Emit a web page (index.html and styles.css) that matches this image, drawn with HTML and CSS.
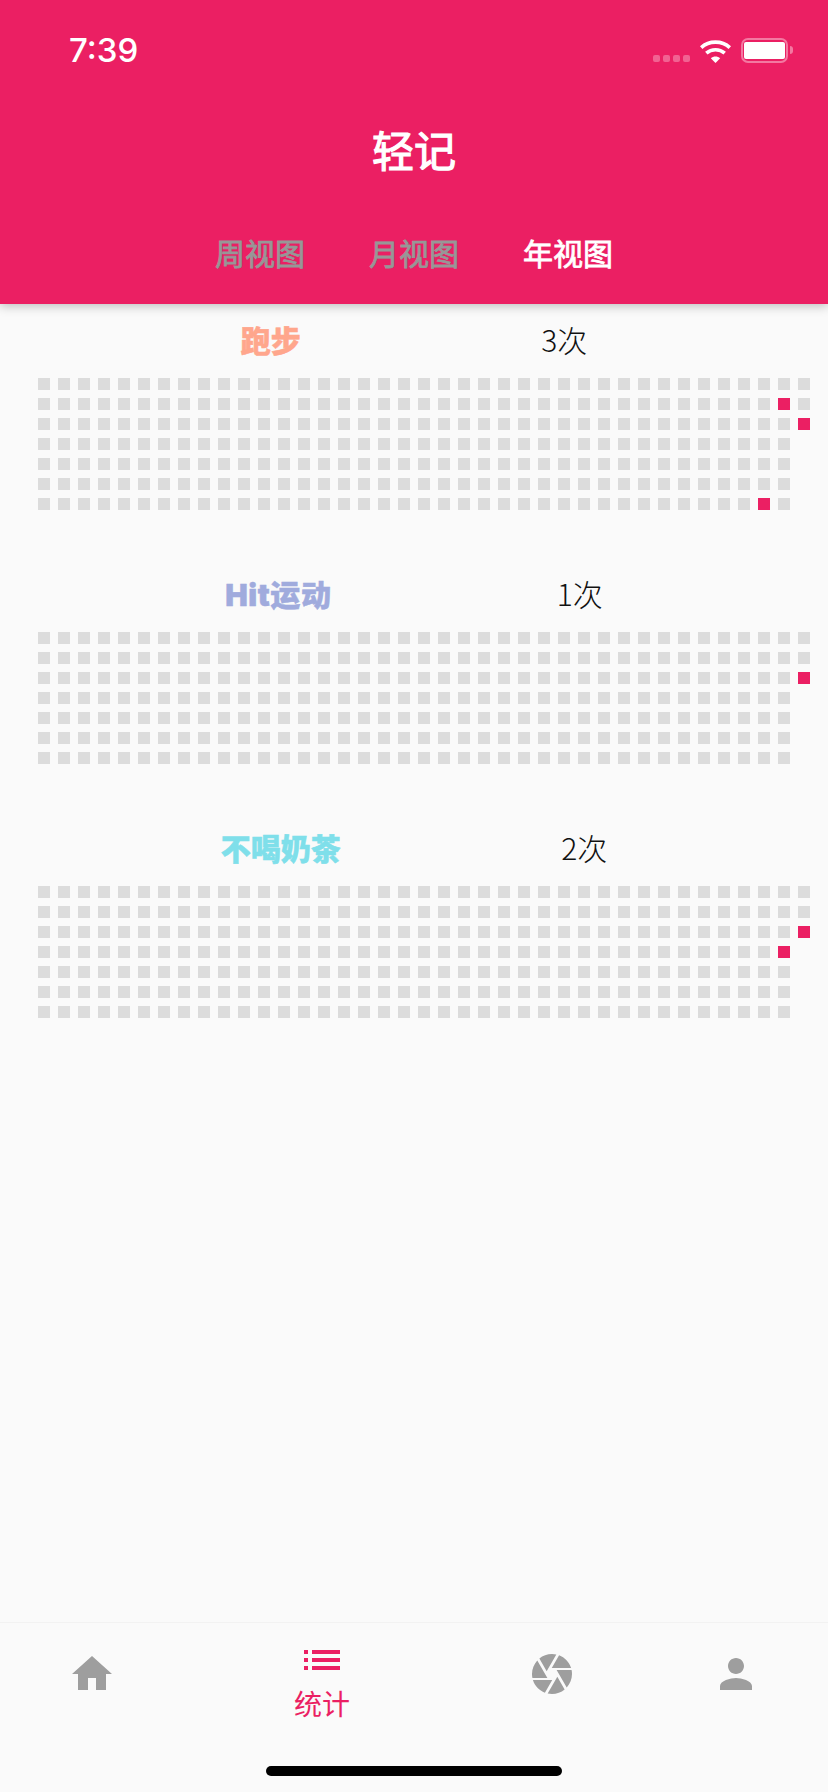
FILE: index.html
```html
<!DOCTYPE html>
<html lang="zh-CN">
<head>
	<meta charset="UTF-8">
	<title>轻记</title>
	<link rel="stylesheet" href="styles.css">
</head>
<body>
	<div class="app">
		<header class="top">
			<div class="status">
				<span class="time">7:39</span>
				<div class="status-icons">
					<div class="signal"><i></i><i></i><i></i><i></i></div>
					<svg class="wifi" width="31" height="23" viewBox="0 0 31 23">
						<path d="M1.2 7.6C9 .3 22 .3 29.8 7.6" fill="none" stroke="#fff" stroke-width="3.6"/>
						<path d="M6.3 13.2C11.5 8.6 19.5 8.6 24.7 13.2" fill="none" stroke="#fff" stroke-width="3.6"/>
						<path d="M10.8 18.2C13.5 16 17.5 16 20.2 18.2L15.5 23z" fill="#fff"/>
					</svg>
					<div class="battery"><div class="level"></div></div>
				</div>
			</div>
			<h1 class="title">轻记</h1>
			<nav class="tabs">
				<span class="tab">周视图</span>
				<span class="tab">月视图</span>
				<span class="tab active">年视图</span>
			</nav>
		</header>

		<main class="main">
			<section class="habit">
				<div class="habit-head">
					<span class="habit-name orange">跑步</span>
					<span class="habit-count">3次</span>
				</div>
				<div class="cells" data-hits="258,260,268"></div>
			</section>
			<section class="habit">
				<div class="habit-head">
					<span class="habit-name indigo">Hit运动</span>
					<span class="habit-count">1次</span>
				</div>
				<div class="cells" data-hits="268"></div>
			</section>
			<section class="habit">
				<div class="habit-head">
					<span class="habit-name cyan">不喝奶茶</span>
					<span class="habit-count">2次</span>
				</div>
				<div class="cells" data-hits="262,268"></div>
			</section>
		</main>

		<footer class="bottom">
			<div class="nav-item">
				<svg width="48" height="48" viewBox="0 0 24 24"><path d="M10 20v-6h4v6h5v-8h3L12 3 2 12h3v8z"/></svg>
			</div>
			<div class="nav-item active">
				<svg width="48" height="48" viewBox="0 0 24 24"><path d="M3 13h2v-2H3v2zm0 4h2v-2H3v2zm0-8h2V7H3v2zm4 4h14v-2H7v2zm0 4h14v-2H7v2zM7 7v2h14V7H7z"/></svg>
				<span class="nav-label">统计</span>
			</div>
			<div class="nav-item">
				<svg width="48" height="48" viewBox="0 0 24 24"><path d="M9.4 10.5l4.77-8.26C13.47 2.09 12.75 2 12 2c-2.4 0-4.6.85-6.32 2.25l3.66 6.35.06-.1zM21.54 9c-.92-2.92-3.15-5.26-6-6.34L11.88 9h9.66zm.26 1h-7.49l.29.5 4.76 8.25C21 16.97 22 14.61 22 12c0-.69-.07-1.35-.2-2zM8.54 12l-3.9-6.75C3.01 7.03 2 9.39 2 12c0 .69.07 1.35.2 2h7.49l-1.15-2zm-6.08 3c.92 2.92 3.15 5.26 6 6.34L12.12 15H2.46zm11.27 0l-3.9 6.76c.7.15 1.42.24 2.17.24 2.4 0 4.6-.85 6.32-2.25l-3.66-6.35-.93 1.6z"/></svg>
			</div>
			<div class="nav-item">
				<svg width="48" height="48" viewBox="0 0 24 24"><path d="M12 12c2.21 0 4-1.79 4-4s-1.79-4-4-4-4 1.79-4 4 1.79 4 4 4zm0 2c-2.67 0-8 1.34-8 4v2h16v-2c0-2.66-5.33-4-8-4z"/></svg>
			</div>
			<div class="home-bar"></div>
		</footer>
	</div>
	<script src="script.js"></script>
</body>
</html>
```
FILE: styles.css
```css
body{
	margin: 0;
	background: #fafafa;
	font-family: "Liberation Sans", "Noto Sans CJK SC", sans-serif;
}
.app{
	width: 828px;
	height: 1792px;
	display: flex;
	flex-direction: column;
	overflow: hidden;
}

/* header */
.top{
	height: 304px;
	flex: none;
	position: relative;
	background: #eb1f63;
	color: #fff;
	box-shadow: 0 2px 10px rgba(0,0,0,.25);
	display: flex;
	flex-direction: column;
	align-items: center;
}
.status{
	width: 100%;
	height: 100px;
	box-sizing: border-box;
	padding: 0 40px 0 69px;
	display: flex;
	justify-content: space-between;
	align-items: center;
}
.time{
	font-family: Inter, sans-serif;
	font-size: 33px;
	font-weight: 500;
	line-height: 42px;
}
.status-icons{
	display: flex;
	align-items: flex-end;
}
.signal{
	display: flex;
	gap: 3px;
	margin: 0 10px 1px 0;
}
.signal i{
	width: 7px;
	height: 7px;
	border-radius: 2px;
	background: rgba(255,255,255,.3);
}
.wifi{
	margin-right: 10px;
}
.battery{
	position: relative;
	width: 47px;
	height: 25px;
	box-sizing: border-box;
	border: 2px solid rgba(255,255,255,.4);
	border-radius: 7px;
	padding: 2px 1px;
}
.battery::after{
	content: '';
	position: absolute;
	right: -7px;
	top: 6px;
	width: 3px;
	height: 8px;
	border-radius: 0 3px 3px 0;
	background: rgba(255,255,255,.4);
}
.level{
	height: 100%;
	background: #fff;
	border-radius: 2px;
}
.title{
	margin: 25px 0 0;
	font-size: 42px;
	line-height: 56px;
	font-weight: 400;
	-webkit-text-stroke: 1.2px currentColor;
}
.tabs{
	margin-top: 54px;
	display: flex;
	gap: 64px;
}
.tab{
	font-size: 30px;
	line-height: 40px;
	font-weight: 400;
	-webkit-text-stroke: .8px currentColor;
	color: #979797;
}
.tab.active{
	color: #fff;
}

/* habit list */
.main{
	flex: 1;
}
.habit{
	margin-bottom: 48px;
}
.habit-head{
	height: 74px;
	box-sizing: border-box;
	padding-bottom: 4px;
	display: flex;
	justify-content: space-evenly;
	align-items: center;
	font-size: 30px;
}
.habit-name{
	font-family: Inter, "Noto Sans CJK SC", sans-serif;
	font-weight: 900;
	-webkit-text-stroke: .5px currentColor;
}
.habit-count{
	font-family: "Noto Sans CJK SC", sans-serif;
	font-weight: 300;
	color: #111;
}
.orange{
	color: #ffa68c;
}
.indigo{
	color: #a0abdd;
	letter-spacing: .6px;
}
.cyan{
	color: #7fdfea;
}
.cells{
	margin-left: 38px;
	display: grid;
	grid-auto-flow: column;
	grid-template-rows: repeat(7,12px);
	grid-auto-columns: 12px;
	gap: 8px;
}
.cell{
	background: #dcdcdc;
}
.cell.hit{
	background: #eb1f63;
}

/* bottom bar */
.bottom{
	height: 170px;
	flex: none;
	position: relative;
	box-sizing: border-box;
	border-top: 1px solid #f2f2f2;
	display: flex;
}
.nav-item{
	flex: 2;
	padding-top: 27px;
	display: flex;
	flex-direction: column;
	align-items: center;
}
.nav-item svg{
	fill: #9e9e9e;
}
.nav-item.active{
	flex: 3;
	padding-top: 13px;
}
.nav-item.active svg{
	fill: #eb1f63;
}
.nav-label{
	margin-top: 2px;
	font-size: 28px;
	line-height: 40px;
	color: #eb1f63;
}
.home-bar{
	position: absolute;
	left: 266px;
	top: 143px;
	width: 296px;
	height: 10px;
	border-radius: 5px;
	background: #000;
}
```
FILE: script.js
```js
// 39 weeks so far, the last one only has three days
var total = 38 * 7 + 3;
var grids = document.querySelectorAll('.cells');
for (var g = 0; g < grids.length; g++) {
	var hits = grids[g].dataset.hits.split(',');
	for (var i = 0; i < total; i++) {
		var div = document.createElement('div');
		div.className = hits.indexOf(String(i)) > -1 ? 'cell hit' : 'cell';
		grids[g].appendChild(div);
	}
}
```
